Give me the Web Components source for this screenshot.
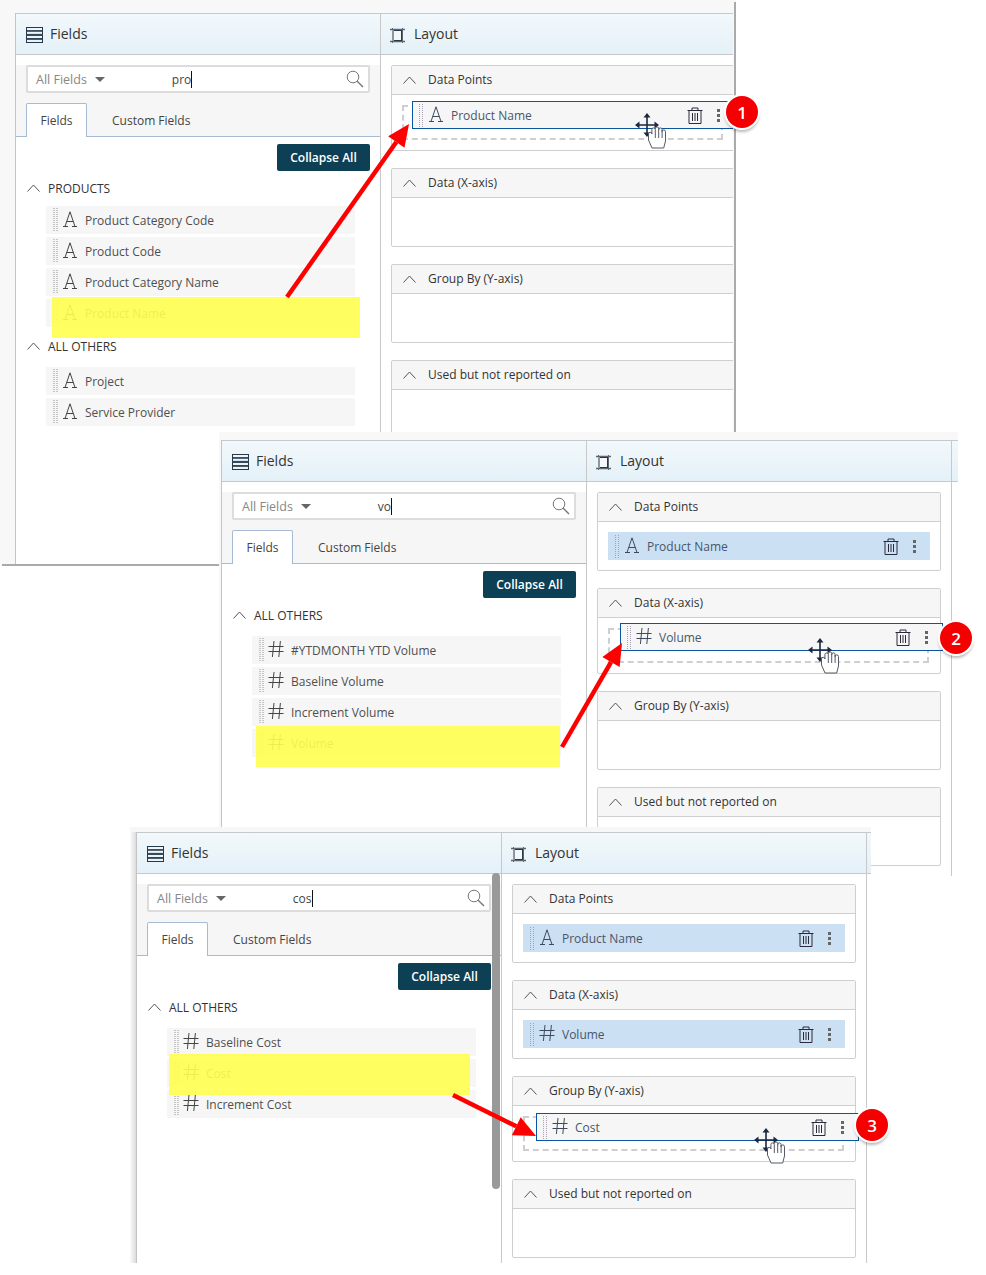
<!DOCTYPE html>
<html lang="en">
<head>
<meta charset="utf-8">
<title>Fields and Layout</title>
<style>
  html, body { margin: 0; background: #fff; }
  body { font-family: "Open Sans", "Liberation Sans", sans-serif; color: #333; overflow: hidden; }
</style>
<script>
const ICONS = {
    text: `<svg width="16" height="16" viewBox="0 0 16 16" fill="none" stroke="currentColor"><path d="M1 15.5h5M10 15.5h5M3 15.5 8 .8l5 14.7M4.8 10.5h6.4"/></svg>`,
    number: `<svg width="16" height="16" viewBox="0 0 16 16" fill="none" stroke="currentColor"><path d="M6 0 4.4 16M12.4 0l-1.6 16M.5 5.5h15M.5 10.5h15"/></svg>`,
    list: `<svg width="17" height="16" viewBox="0 0 17 16" fill="none" stroke="#24394a"><rect x=".5" y=".5" width="16" height="3.2"/><rect x=".5" y="4.2" width="16" height="3.2"/><rect x=".5" y="8.4" width="16" height="3.2"/><rect x=".5" y="12.3" width="16" height="3.2"/></svg>`,
    frame: `<svg width="17" height="16" viewBox="0 0 17 16" fill="none"><path d="M0 2.5h15M0 14.5h15" stroke="#5d6770" stroke-width="1.4"/><path d="M2.5 1v15M12.5 1v15" stroke="#5d6770"/><rect x="3" y="3" width="9" height="11" fill="#f4f8fa"/><rect x="3.5" y="3.5" width="8" height="10" stroke="#24394a"/><rect x="2" y="3" width="2" height="11" fill="#8d979f"/></svg>`,
    search: `<svg width="18" height="18" viewBox="0 0 18 18" fill="none" stroke="#777"><circle cx="7" cy="7" r="5.8"/><path d="m11.2 11.2 5.8 5.8" stroke-width="1.4"/></svg>`,
    chevron: `<svg width="13" height="8" viewBox="0 0 13 8" fill="none" stroke="#555"><path d="m.5 7.5 6-6.5 6 6.5"/></svg>`,
    trash: `<svg width="16" height="17" viewBox="0 0 16 17" fill="none" stroke="#2a2a3a"><path d="M.5 3.5h15M5 3.5V1h6v2.5M2 3.5v13h12v-13M5.5 6v8M8 6v8M10.5 6v8"/></svg>`
};

function makeTemplate(html) {
    const t = document.createElement("template");
    t.innerHTML = html;
    return t;
}

class AppIcon extends HTMLElement {
    connectedCallback() {
        if (!this.shadowRoot) this.attachShadow({ mode: "open" });
        this.shadowRoot.innerHTML = `<style>:host{display:inline-flex;flex:none;line-height:0}</style>` + ICONS[this.getAttribute("name")];
    }
}

class TutoCanvas extends HTMLElement {
    constructor() {
        super();
        this.attachShadow({ mode: "open" });
        this.shadowRoot.append(TutoCanvas.template.content.cloneNode(true));
    }
}
TutoCanvas.template = makeTemplate(`
<style>:host{display:block;position:relative;width:986px;height:1275px;overflow:hidden;background:#fff}</style>
<slot></slot>`);

// one pasted screenshot: sits on the free canvas, the inside is plain flow
class ReportWindow extends HTMLElement {
    constructor() {
        super();
        this.attachShadow({ mode: "open" });
        this.shadowRoot.append(ReportWindow.template.content.cloneNode(true));
    }
}
ReportWindow.template = makeTemplate(`
<style>
  :host{position:absolute;display:block;box-sizing:border-box;background:#f8f8f8;
    left:var(--x);top:var(--y);width:var(--w);height:var(--h);
    padding:var(--cap) var(--end,0) var(--foot,0) var(--gutter)}
  .body{display:flex;height:100%;overflow:hidden;background:#fff}
  .tail{flex:1;min-width:0}
  .tail div{height:42px;box-sizing:border-box;background:linear-gradient(#f2f8fb,#e4f1f8);
    border-top:1px solid #c6c9cb;border-bottom:1px solid #c6c9cb}
</style>
<div class="body">
  <slot name="fields"></slot>
  <slot name="layout"></slot>
  <div class="tail"><div></div></div>
</div>`);

class PanelHeader extends HTMLElement {
    connectedCallback() {
        if (this.shadowRoot) return;
        this.attachShadow({ mode: "open" });
        this.shadowRoot.innerHTML = `
<style>
  :host{display:flex;align-items:center;gap:7px;height:42px;box-sizing:border-box;padding:0 0 2px var(--head-pad,10px);
    background:linear-gradient(#f2f8fb,#e4f1f8);border-top:1px solid #c6c9cb;border-bottom:1px solid #c6c9cb;
    font-size:14px;color:#333}
  app-icon{margin-top:3px}
</style>
<app-icon name="${this.getAttribute("icon")}"></app-icon><span>${this.getAttribute("label")}</span>`;
    }
}

class SearchBox extends HTMLElement {
    connectedCallback() {
        if (this.shadowRoot) return;
        this.attachShadow({ mode: "open" });
        this.shadowRoot.innerHTML = `
<style>
  :host{display:flex;align-items:center;height:28px;box-sizing:border-box;margin:10px 10px 0 10px;padding:0 4px 0 8px;
    background:#fff;border:2px solid #dcdcdc;border-radius:2px;font-size:12.5px;color:#888}
  .caret{width:0;height:0;margin-left:8px;border:5px solid transparent;border-top-color:#666;border-bottom:0}
  .query{margin-left:67px;color:#444;border-right:1px solid #111;line-height:17px;font-size:12px}
  app-icon{margin-left:auto}
</style>
<span>All Fields</span><span class="caret"></span>
<span class="query">${this.getAttribute("value")}</span>
<app-icon name="search"></app-icon>`;
    }
}

class TabBar extends HTMLElement {
    constructor() {
        super();
        this.attachShadow({ mode: "open" });
        this.shadowRoot.append(TabBar.template.content.cloneNode(true));
    }
}
TabBar.template = makeTemplate(`
<style>
  :host{display:flex;height:34px;box-sizing:border-box;margin-top:10px;padding-left:10px;
    border-bottom:1px solid #a6bad2;font-size:12px;color:#444}
  span{display:flex;align-items:center;justify-content:center;box-sizing:border-box;height:34px}
  .on{width:61px;background:#fff;border:1px solid #a6bad2;border-bottom:0;border-radius:2px 2px 0 0}
  .off{margin-left:25px}
</style>
<span class="on">Fields</span><span class="off">Custom Fields</span>`);

class FieldRow extends HTMLElement {
    connectedCallback() {
        if (this.shadowRoot) return;
        this.attachShadow({ mode: "open" });
        this.shadowRoot.innerHTML = `
<style>
  :host{display:flex;align-items:center;height:28px;margin:0 0 3px 30px;width:309px;background:#f6f6f6;
    font-size:12px;color:#4f4f4f}
  .grip{width:5px;height:24px;margin-left:7px;
    background:repeating-linear-gradient(0deg,#f6f6f6 0 1px,transparent 1px 2px),repeating-linear-gradient(90deg,#c6c6c6 0 2px,#f6f6f6 2px 3px)}
  app-icon{margin:0 0 2px 4px;color:#444}
  span.t{margin-left:7px}
</style>
<span class="grip"></span><app-icon name="${this.getAttribute("type")}"></app-icon><span class="t">${this.getAttribute("label")}</span>`;
    }
}

class FieldGroup extends HTMLElement {
    connectedCallback() {
        if (this.shadowRoot) return;
        this.attachShadow({ mode: "open" });
        this.shadowRoot.innerHTML = `
<style>
  :host{display:block}
  .head{display:flex;align-items:center;height:20px;padding-left:11px;font-size:12px;color:#333;margin-bottom:${this.getAttribute("gap") || 10}px}
  span{margin-left:8px}
</style>
<div class="head"><app-icon name="chevron"></app-icon><span>${this.getAttribute("label")}</span></div>
<slot></slot>`;
    }
}

class FieldsPanel extends HTMLElement {
    connectedCallback() {
        if (this.shadowRoot) return;
        this.attachShadow({ mode: "open" });
        this.shadowRoot.innerHTML = `
<style>
  :host{display:block;position:relative;flex:none;width:366px;box-sizing:border-box;
    border-left:1px solid #c4c4c4;border-right:1px solid #c8c8c8;background:#fff}
  .top{background:#f6f6f6}
  .tools{display:flex;justify-content:flex-end;padding:7px 10px 7px 0}
  button{all:unset;width:93px;height:27px;background:#0d3f55;color:#fff;border-radius:2px;
    font:600 12px "Open Sans","Liberation Sans",sans-serif;text-align:center}
  ::slotted(field-group){margin-bottom:9px}
  .thumb{display:none;position:absolute;right:1px;top:41px;width:8px;height:316px;border-radius:4px;background:#999}
  :host([scroll]) .thumb{display:block}
</style>
<panel-header icon="list" label="Fields"></panel-header>
<div class="top">
  <search-box value="${this.getAttribute("query")}"></search-box>
  <tab-bar></tab-bar>
</div>
<div class="tools"><button>Collapse All</button></div>
<slot></slot>
<span class="thumb"></span>`;
    }
}

class LayoutPanel extends HTMLElement {
    constructor() {
        super();
        this.attachShadow({ mode: "open" });
        this.shadowRoot.append(LayoutPanel.template.content.cloneNode(true));
    }
}
LayoutPanel.template = makeTemplate(`
<style>
  :host{display:block;flex:none;width:365px;box-sizing:border-box;border-right:1px solid #c8c8c8;background:#fff;--head-pad:9px}
  .list{display:flex;flex-direction:column;gap:17px;padding:10px 0 0 10px}
</style>
<panel-header icon="frame" label="Layout"></panel-header>
<div class="list"><slot></slot></div>`);

class LayoutSection extends HTMLElement {
    connectedCallback() {
        if (this.shadowRoot) return;
        this.attachShadow({ mode: "open" });
        this.shadowRoot.innerHTML = `
<style>
  :host{display:block;width:344px;box-sizing:border-box;border:1px solid #cfcfcf;border-radius:2px;background:#fff;flex:none}
  .head{display:flex;align-items:center;height:28px;box-sizing:border-box;padding:0 0 1px 11px;background:#f6f6f6;font-size:12px;color:#333}
  .line{height:1px;background:#cfcfcf}
  span{margin-left:12px}
  .body{min-height:28px;padding:10px}
</style>
<div class="head"><app-icon name="chevron"></app-icon><span>${this.getAttribute("label")}</span></div>
<div class="line"></div>
<div class="body"><slot></slot></div>`;
    }
}

// row content shared by the dropped item and the dragged item
function itemRowHtml(type, label) {
    return `<span class="grip"></span><app-icon class="kind" name="${type}"></app-icon><span class="t">${label}</span>
<app-icon class="bin" name="trash"></app-icon><span class="dots"><i></i><i></i><i></i></span>`;
}
const itemRowCss = `
  .grip{flex:none;width:4px;height:24px;margin-left:7px;
    background:repeating-linear-gradient(0deg,transparent 0 1px,var(--row-bg) 1px 2px),repeating-linear-gradient(90deg,#ab9fb8 0 1px,transparent 1px 3px)}
  .kind{margin:0 0 2px 5px;color:#3d4a5c}
  .t{margin-left:7px}
  .bin{margin-left:auto}
  .dots{display:flex;flex-direction:column;gap:2px;margin:0 14px}
  .dots i{display:block;width:3px;height:3px;background:#666}`;

class SectionItem extends HTMLElement {
    connectedCallback() {
        if (this.shadowRoot) return;
        this.attachShadow({ mode: "open" });
        this.shadowRoot.innerHTML = `
<style>
  :host{display:flex;align-items:center;height:28px;--row-bg:#cce0f4;background:#cce0f4;font-size:12px;color:#47566a}
  ${itemRowCss}
</style>${itemRowHtml(this.getAttribute("type"), this.getAttribute("label"))}`;
    }
}

// dashed placeholder with the dragged row floating over it
class DropSlot extends HTMLElement {
    connectedCallback() {
        if (this.shadowRoot) return;
        this.attachShadow({ mode: "open" });
        this.shadowRoot.innerHTML = `
<style>
  :host{display:block;position:relative;height:35px;box-sizing:border-box;margin-right:1px;border:2px dashed #cfcfcf}
  .drag{position:absolute;left:${this.getAttribute("dx")}px;top:${this.getAttribute("dy")}px;width:323px;height:28px;box-sizing:border-box;--row-bg:#f6f6f6;
    display:flex;align-items:center;background:#f6f6f6;border:1px solid #0b559f;font-size:12px;color:#47566a}
  ${itemRowCss}
  .grip{margin-left:6px}
  .dots{margin-right:14px}
</style>
<div class="drag">${itemRowHtml(this.getAttribute("type"), this.getAttribute("label"))}</div>`;
    }
}

class YellowMark extends HTMLElement {
    constructor() {
        super();
        this.attachShadow({ mode: "open" });
        this.shadowRoot.innerHTML = `<style>:host{position:absolute;background:rgba(255,255,80,.9)}</style>`;
    }
}

class StepBadge extends HTMLElement {
    constructor() {
        super();
        this.attachShadow({ mode: "open" });
        this.shadowRoot.innerHTML = `
<style>
  :host{position:absolute;display:flex;align-items:center;justify-content:center;width:32px;height:32px;border-radius:50%;
    background:#f40000;color:#fff;font:600 17px "Open Sans","Liberation Sans",sans-serif;
    box-shadow:0 0 0 2px #fff,0 3px 3px 1px rgba(0,0,0,.28)}
</style><slot></slot>`;
    }
}

class RedArrow extends HTMLElement {
    connectedCallback() {
        if (this.shadowRoot) return;
        this.attachShadow({ mode: "open" });
        const [x1, y1, x2, y2] = this.getAttribute("points").split(" ").map(Number);
        const len = Math.hypot(x2 - x1, y2 - y1), ux = (x2 - x1) / len, uy = (y2 - y1) / len;
        const bx = x2 - ux * 22, by = y2 - uy * 22, hw = 10;
        const head = `${x2},${y2} ${bx - uy * hw},${by + ux * hw} ${bx + uy * hw},${by - ux * hw}`;
        this.shadowRoot.innerHTML = `
<style>:host{position:absolute;left:0;top:0;pointer-events:none}</style>
<svg width="986" height="1275" style="display:block">
  <line x1="${x1}" y1="${y1}" x2="${bx}" y2="${by}" stroke="#ff0000" stroke-width="4.5"/>
  <polygon points="${head}" fill="#ff0000"/>
</svg>`;
    }
}

class DragCursor extends HTMLElement {
    constructor() {
        super();
        this.attachShadow({ mode: "open" });
        this.shadowRoot.innerHTML = `
<style>:host{position:absolute;width:34px;height:38px;margin:-12px 0 0 -12px;line-height:0}</style>
<svg width="34" height="38" viewBox="0 0 34 38" fill="none">
  <path d="M12 3v18M3 12h18" stroke="#1c2840" stroke-width="1.6"/>
  <path d="M12 0l3.5 4.5h-7zM0 12l4.5-3.5v7zM24 12l-4.5-3.5v7zM12 24l-3.5-4.5h7z" fill="#1c2840"/>
  <path d="M17 35 13.5 27v-6a1.7 1.7 0 0 1 3.4 0v-4.4a1.7 1.7 0 0 1 3.4 0v-1a1.7 1.7 0 0 1 3.4 0v1a1.7 1.7 0 0 1 3.4 0v2a1.7 1.7 0 0 1 3.4 0V28l-1.8 7z" fill="#fff" stroke="#555a66"/>
  <path d="M20.3 17v8M23.7 16v9M27.1 17v8" stroke="#555a66"/>
</svg>`;
    }
}

customElements.define("app-icon", AppIcon);
customElements.define("tuto-canvas", TutoCanvas);
customElements.define("report-window", ReportWindow);
customElements.define("panel-header", PanelHeader);
customElements.define("search-box", SearchBox);
customElements.define("tab-bar", TabBar);
customElements.define("field-row", FieldRow);
customElements.define("field-group", FieldGroup);
customElements.define("fields-panel", FieldsPanel);
customElements.define("layout-panel", LayoutPanel);
customElements.define("layout-section", LayoutSection);
customElements.define("section-item", SectionItem);
customElements.define("drop-slot", DropSlot);
customElements.define("yellow-mark", YellowMark);
customElements.define("step-badge", StepBadge);
customElements.define("red-arrow", RedArrow);
customElements.define("drag-cursor", DragCursor);
</script>
</head>
<body>
<tuto-canvas>

  <report-window style="--x:0px;--y:0px;--w:736px;--h:566px;--cap:13px;--gutter:15px;--end:3px;--foot:2px;
      background:linear-gradient(#aaa,#aaa) 734px 2px/2px 100% no-repeat,linear-gradient(#aaa,#aaa) 2px 564px/100% 2px no-repeat,#f8f8f8">
    <fields-panel slot="fields" query="pro">
      <field-group label="PRODUCTS" gap="8">
        <field-row type="text" label="Product Category Code"></field-row>
        <field-row type="text" label="Product Code"></field-row>
        <field-row type="text" label="Product Category Name"></field-row>
        <field-row type="text" label="Product Name"></field-row>
      </field-group>
      <field-group label="ALL OTHERS" gap="11">
        <field-row type="text" label="Project"></field-row>
        <field-row type="text" label="Service Provider"></field-row>
      </field-group>
    </fields-panel>
    <layout-panel slot="layout">
      <layout-section label="Data Points"><drop-slot type="text" label="Product Name" dx="8" dy="-6"></drop-slot></layout-section>
      <layout-section label="Data (X-axis)"></layout-section>
      <layout-section label="Group By (Y-axis)"></layout-section>
      <layout-section label="Used but not reported on"></layout-section>
    </layout-panel>
  </report-window>

  <report-window style="--x:219px;--y:432px;--w:739px;--h:444px;--cap:8px;--gutter:2px">
    <fields-panel slot="fields" query="vo">
      <field-group label="ALL OTHERS" gap="11">
        <field-row type="number" label="#YTDMONTH YTD Volume"></field-row>
        <field-row type="number" label="Baseline Volume"></field-row>
        <field-row type="number" label="Increment Volume"></field-row>
        <field-row type="number" label="Volume"></field-row>
      </field-group>
    </fields-panel>
    <layout-panel slot="layout">
      <layout-section label="Data Points"><section-item type="text" label="Product Name"></section-item></layout-section>
      <layout-section label="Data (X-axis)"><drop-slot type="number" label="Volume" dx="10" dy="-7"></drop-slot></layout-section>
      <layout-section label="Group By (Y-axis)"></layout-section>
      <layout-section label="Used but not reported on"></layout-section>
    </layout-panel>
  </report-window>

  <report-window style="--x:130px;--y:827px;--w:741px;--h:436px;--cap:5px;--gutter:6px;
      background:linear-gradient(90deg,#fbfbfb,#dcdcdc) 0 5px/6px 100% no-repeat,linear-gradient(#f8f6f6,#f8f6f6) 0 0/100% 5px no-repeat">
    <fields-panel slot="fields" query="cos" scroll>
      <field-group label="ALL OTHERS" gap="11">
        <field-row type="number" label="Baseline Cost"></field-row>
        <field-row type="number" label="Cost"></field-row>
        <field-row type="number" label="Increment Cost"></field-row>
      </field-group>
    </fields-panel>
    <layout-panel slot="layout">
      <layout-section label="Data Points"><section-item type="text" label="Product Name"></section-item></layout-section>
      <layout-section label="Data (X-axis)"><section-item type="number" label="Volume"></section-item></layout-section>
      <layout-section label="Group By (Y-axis)"><drop-slot type="number" label="Cost" dx="11" dy="-5"></drop-slot></layout-section>
      <layout-section label="Used but not reported on"></layout-section>
    </layout-panel>
  </report-window>

  <yellow-mark style="left:52px;top:297px;width:308px;height:41px"></yellow-mark>
  <yellow-mark style="left:256px;top:726px;width:304px;height:41px"></yellow-mark>
  <yellow-mark style="left:169px;top:1054px;width:301px;height:41px"></yellow-mark>

  <red-arrow points="287 297 409 124"></red-arrow>
  <red-arrow points="562 747 622 643"></red-arrow>
  <red-arrow points="453 1095 536 1136"></red-arrow>

  <drag-cursor style="left:647px;top:125px"></drag-cursor>
  <drag-cursor style="left:820px;top:650px"></drag-cursor>
  <drag-cursor style="left:766px;top:1140px"></drag-cursor>

  <step-badge style="left:726px;top:96px">1</step-badge>
  <step-badge style="left:940px;top:622px">2</step-badge>
  <step-badge style="left:856px;top:1109px">3</step-badge>

</tuto-canvas>
</body>
</html>
